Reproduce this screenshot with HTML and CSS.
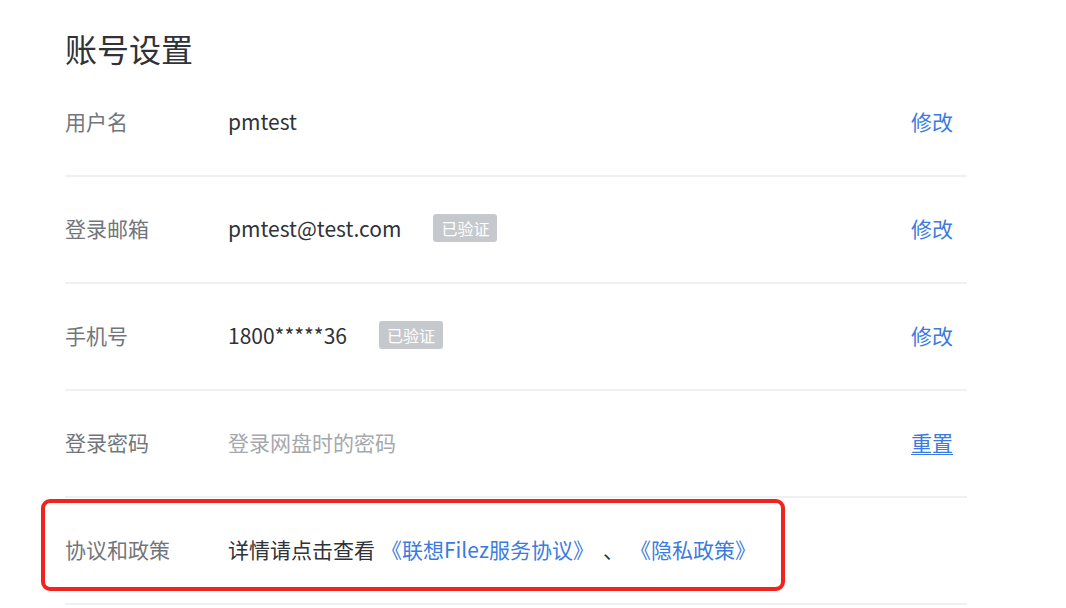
FILE: index.html
```html
<!DOCTYPE html>
<html lang="zh-CN">
<head>
<meta charset="utf-8">
<link rel="stylesheet" href="styles.css">
</head>
<body>
<div class="page">
  <h1 class="title">账号设置</h1>
  <div class="list">
    <div class="row">
      <div class="label">用户名</div>
      <div class="value">pmtest</div>
      <a class="action">修改</a>
    </div>
    <div class="row">
      <div class="label">登录邮箱</div>
      <div class="value">pmtest@test.com<span class="badge">已验证</span></div>
      <a class="action">修改</a>
    </div>
    <div class="row">
      <div class="label">手机号</div>
      <div class="value">1800*****36<span class="badge">已验证</span></div>
      <a class="action">修改</a>
    </div>
    <div class="row">
      <div class="label">登录密码</div>
      <div class="value muted">登录网盘时的密码</div>
      <a class="action underline">重置</a>
    </div>
    <div class="row highlight">
      <div class="label">协议和政策</div>
      <div class="value">详情请点击查看 <a class="link first">《联想Filez服务协议》</a><span class="sep">、</span><a class="link">《隐私政策》</a></div>
    </div>
  </div>
</div>
</body>
</html>
```
FILE: styles.css
```css
html, body {
  margin: 0;
  padding: 0;
  background: #ffffff;
}
body {
  font-family: "Noto Sans CJK SC", "Microsoft YaHei", sans-serif;
  color: #33363b;
}
.page {
  padding: 0 99px 0 65px;
}
.title {
  margin: 0;
  height: 70px;
  padding-top: 25px;
  box-sizing: border-box;
  font-size: 32px;
  font-weight: 400;
  line-height: 46px;
  color: #2f3237;
}
.list {
  display: flex;
  flex-direction: column;
}
.row {
  height: 107px;
  display: flex;
  align-items: center;
  padding-bottom: 3px;
  border-bottom: 2px solid #eef0f2;
  box-sizing: border-box;
  font-size: 21px;
  position: relative;
}
.label {
  width: 163px;
  color: #72767c;
  flex: none;
}
.value {
  flex: 1;
  color: #2f3237;
  display: flex;
  align-items: center;
}
.value.muted {
  color: #a5a8ad;
}
.badge {
  margin-left: 32px;
  background: #c5c9ce;
  color: #ffffff;
  font-size: 16px;
  line-height: 28px;
  padding: 0 8px;
  border-radius: 3px;
}
.action {
  color: #3b7be0;
  margin-right: 14px;
  cursor: pointer;
}
.action.underline {
  text-decoration: underline;
  text-decoration-thickness: 1px;
  text-underline-offset: 3px;
}
.link {
  color: #3b7be0;
}
.link.first {
  margin-left: 6px;
}
.sep {
  margin: 0 6px 0 9px;
  color: #2f3237;
}
.highlight::after {
  content: "";
  position: absolute;
  left: -24px;
  top: 1px;
  width: 744px;
  height: 92px;
  border: 4px solid #f2231f;
  border-radius: 9px;
  box-sizing: border-box;
}
```
